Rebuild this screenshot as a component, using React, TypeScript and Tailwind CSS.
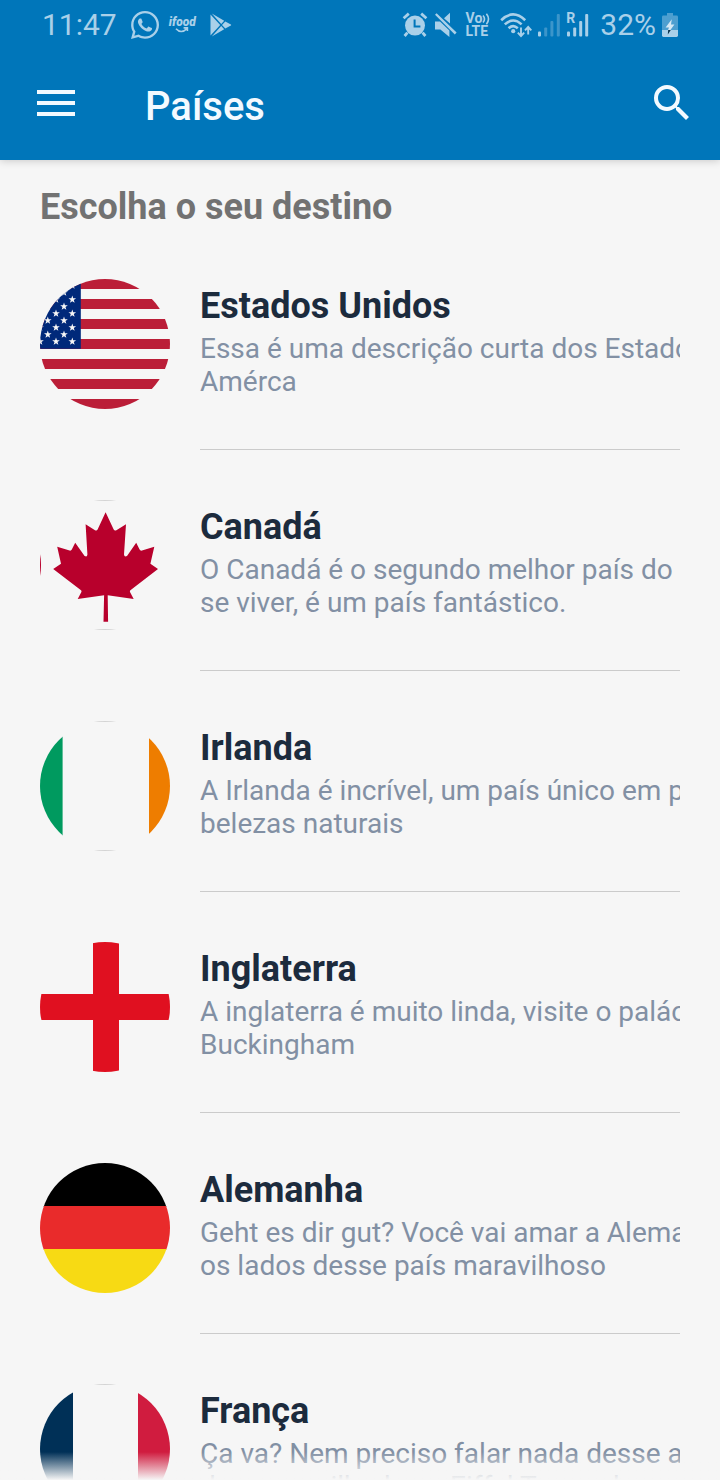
import type { ReactNode } from 'react';
import { FaWhatsapp } from 'react-icons/fa';

type Country = { name: string; lines: [string, string]; flag: ReactNode };

const STAR = 'M0-4 .94-1.24 3.8-1.24 1.5.48 2.35 3.24 0 1.54-2.35 3.24-1.5.48-3.8-1.24-.94-1.24Z';

function Flag({ label, children }: { label: string; children: ReactNode }) {
  return (
    <svg viewBox="0 0 130 130" role="img" aria-label={label} className="size-[130px] overflow-hidden rounded-full">
      {children}
    </svg>
  );
}

function PaleEdges() {
  return (
    <g fill="#d4d4d4">
      <rect width="130" height="1" />
      <rect y="129" width="130" height="1" />
    </g>
  );
}

function UsaFlag() {
  const stars: [number, number][] = [];
  for (let row = 0; row < 9; row++) {
    const columns = row % 2 === 0 ? [0, 16, 32.3] : [7.8, 24];
    columns.forEach((x) => stars.push([x, 6.6 + row * 7]));
  }
  return (
    <Flag label="Bandeira dos Estados Unidos">
      {[0, 20, 40, 60, 80, 100, 120].map((y) => (
        <rect key={y} y={y} width="130" height="10" fill="#bb1e38" />
      ))}
      <rect width="40.8" height="69.8" fill="#00297a" />
      {stars.map(([x, y]) => (
        <path key={`${x}-${y}`} d={STAR} transform={`translate(${x} ${y})`} fill="#f6f6f6" />
      ))}
    </Flag>
  );
}

function CanadaFlag() {
  return (
    <Flag label="Bandeira do Canadá">
      <PaleEdges />
      <rect y="40" width="1" height="50" fill="#b8002c" />
      <path
        fill="#b8002c"
        d="M65.6 12.3 73.7 29.4Q74.6 31.2 76.4 30.2L86 24.3 84 54.6Q84.4 57.4 87 56L96.2 42.7 99.6 49.6Q100.2 51 102 50.6L114.3 46.7 110.4 63.7 118 69 90.4 90.2Q89.6 91 90 92L93.7 99 67.7 95.2 68.1 121.7H63.5L64.1 95.2 37.7 99 41.4 92Q41.8 91 41 90.2L13.2 69 21 63.7 17.2 46.7 29.6 50.6Q31 51 31.8 49.6L35.2 42.7 44.6 56Q47.2 57.4 47.4 54.6L45.6 24.3 55 30.2Q56.8 31.2 57.6 29.4Z"
      />
    </Flag>
  );
}

function IrelandFlag() {
  return (
    <Flag label="Bandeira da Irlanda">
      <PaleEdges />
      <rect width="22.6" height="130" fill="#009a5f" />
      <rect x="109" width="21" height="130" fill="#ee7d00" />
    </Flag>
  );
}

function EnglandFlag() {
  return (
    <Flag label="Bandeira da Inglaterra">
      <rect x="53" width="26" height="130" fill="#e01020" />
      <rect y="52" width="130" height="26" fill="#e01020" />
    </Flag>
  );
}

function GermanyFlag() {
  return (
    <Flag label="Bandeira da Alemanha">
      <rect width="130" height="44" fill="#000" />
      <rect y="43" width="130" height="44" fill="#e92b2b" />
      <rect y="86" width="130" height="44" fill="#f7da14" />
    </Flag>
  );
}

function FranceFlag() {
  return (
    <Flag label="Bandeira da França">
      <PaleEdges />
      <rect width="33" height="130" fill="#003057" />
      <rect x="98" width="32" height="130" fill="#d01c3f" />
    </Flag>
  );
}

const countries: Country[] = [
  {
    name: 'Estados Unidos',
    lines: ['Essa é uma descrição curta dos Estados Unidos da', 'Amérca'],
    flag: <UsaFlag />,
  },
  {
    name: 'Canadá',
    lines: ['O Canadá é o segundo melhor país do mundo para', 'se viver, é um país fantástico.'],
    flag: <CanadaFlag />,
  },
  {
    name: 'Irlanda',
    lines: ['A Irlanda é incrível, um país único em paisagens e', 'belezas naturais'],
    flag: <IrelandFlag />,
  },
  {
    name: 'Inglaterra',
    lines: ['A inglaterra é muito linda, visite o palácio de', 'Buckingham'],
    flag: <EnglandFlag />,
  },
  {
    name: 'Alemanha',
    lines: ['Geht es dir gut? Você vai amar a Alemanha e todos', 'os lados desse país maravilhoso'],
    flag: <GermanyFlag />,
  },
  {
    name: 'França',
    lines: ['Ça va? Nem preciso falar nada desse amor', 'dos maravilhados a Eiffel Tower de'],
    flag: <FranceFlag />,
  },
];

function StatusBar() {
  return (
    <div className="flex h-[50px] items-center justify-between px-[42px] text-[#a9d0e9]">
      <div className="flex items-center">
        <span className="text-[30px] leading-[36px]">11:47</span>
        <FaWhatsapp className="ml-3 size-8" />
        <span className="ml-2 flex flex-col items-center">
          <span className="text-[12px] leading-[10px] font-black italic">ifood</span>
          <svg viewBox="0 0 14 6" className="h-1.5 w-3.5" fill="none" stroke="currentColor" strokeWidth="1.6">
            <path d="M1 1.8Q6 7.4 12 1.6M8.6.9H12.4V4" />
          </svg>
        </span>
        <svg viewBox="0 0 22 24" className="ml-3.5 h-6 w-[22px]" fill="currentColor">
          <path d="M.5 1.6V22.4L10.2 12ZM1.8.6 11.2 10.9 14.2 7.8ZM1.8 23.4 11.2 13.1 14.2 16.2ZM15.3 8.5 12 12l3.3 3.5 5.6-3.1q.7-.4 0-.8Z" />
        </svg>
      </div>
      <div className="flex items-center">
        <svg viewBox="0 0 26 26" className="size-[26px]">
          <circle cx="13" cy="13.6" r="10" fill="currentColor" />
          <path d="M1.6 6.2 6.8 1.6M24.4 6.2 19.2 1.6M5.4 20.6 2.6 24M20.6 20.6l2.8 3.4" stroke="currentColor" strokeWidth="2.8" />
          <path d="M12.6 7.6v6.8h5.8" fill="none" stroke="#0076ba" strokeWidth="2" />
        </svg>
        <svg viewBox="0 0 24 26" className="ml-1.5 h-[26px] w-6" fill="currentColor">
          <path d="M1 9.4V17.4H6.4L15.4 25V18.6L6 9.4ZM16 .8V11.6L10 6.2ZM1 2.8 2.6 1.2 22.6 20.6 20.8 22.6Z" />
        </svg>
        <span className="ml-2 flex flex-col text-[14px] leading-[13px] font-bold">
          <span className="flex items-center">
            Vo
            <svg viewBox="0 0 8 12" className="h-3 w-2" fill="none" stroke="currentColor" strokeWidth="1.6">
              <path d="M1 2.5Q4 6 1 9.5M4.4.8Q8.6 6 4.4 11.2" />
            </svg>
          </span>
          <span>LTE</span>
        </span>
        <svg viewBox="0 0 32 26" className="ml-2.5 h-[26px] w-8">
          <path d="M1.2 8.2Q13-3.4 25.2 8.2M4.8 12.4Q13.2 4.6 21.6 12.4M8.6 16.2Q13.2 12 17.8 16.2" fill="none" stroke="currentColor" strokeWidth="2.6" />
          <circle cx="13.2" cy="19.2" r="2.1" fill="currentColor" />
          <path d="M21 15.5v8.2M17.8 20.6 21 24l3.2-3.4M28.2 22.5v-7M25 18.4 28.2 15l3.2 3.4" fill="none" stroke="currentColor" strokeWidth="1.9" />
        </svg>
        <svg viewBox="0 0 23 24" className="ml-1.5 h-6 w-[23px]" fill="currentColor">
          <rect y="18.5" width="3" height="5" rx="1" />
          <g opacity=".35">
            <rect x="6.2" y="14.5" width="3" height="9" rx="1" />
            <rect x="12.4" y="8" width="3" height="15.5" rx="1" />
            <rect x="18.8" y="1" width="3" height="22.5" rx="1" />
          </g>
        </svg>
        <span className="relative ml-[5px] block">
          <span className="absolute top-0 left-0 text-[14px] leading-[10px] font-bold">R</span>
          <svg viewBox="0 0 23 24" className="h-6 w-[23px]" fill="currentColor">
            <rect x="1" y="18.5" width="3" height="5" rx="1" />
            <rect x="7.2" y="14.5" width="3" height="9" rx="1" />
            <rect x="13.2" y="8" width="3" height="15.5" rx="1" />
            <rect x="19.2" y="1" width="3" height="22.5" rx="1" />
          </svg>
        </span>
        <span className="ml-[11px] text-[30px] leading-[36px]">32%</span>
        <svg viewBox="0 0 16 24" className="ml-1.5 h-6 w-4">
          <path d="M5 0h6v2.6h3.6Q16 2.6 16 4V17H0V4Q0 2.6 1.4 2.6H5Z" fill="#4d9fd0" />
          <path d="M0 17H16V22.6Q16 24 14.6 24H1.4Q0 24 0 22.6Z" fill="currentColor" />
          <path d="M9.8 6.2 3.6 14.6H7L6 17h2.4L12.4 11.6H9Z" fill="#d5e9f5" />
          <path d="M6.2 17h2.6L5.8 21.4Z" fill="#06304a" />
        </svg>
      </div>
    </div>
  );
}

function AppHeader() {
  return (
    <header className="relative z-10 shrink-0 bg-[#0076ba] pb-1 shadow-[0_1px_8px_rgba(0,0,0,0.18)]">
      <StatusBar />
      <div className="flex h-[106px] items-center pr-6 pl-[37px] text-[#f3faff]">
        <button type="button" aria-label="Abrir menu">
          <svg viewBox="0 0 38 26" className="h-[26px] w-[38px]" fill="currentColor">
            <path d="M0 0H38V4H0ZM0 11H38V15H0ZM0 22H38V26H0Z" />
          </svg>
        </button>
        <h1 className="ml-[70px] flex-1 pt-2 text-[40px] leading-[48px] font-medium">Países</h1>
        <button type="button" aria-label="Buscar">
          <svg viewBox="0 0 24 24" className="size-12" fill="currentColor">
            <path d="M15.5 14h-.79l-.28-.27A6.47 6.47 0 0 0 16 9.5 6.5 6.5 0 1 0 9.5 16c1.61 0 3.09-.59 4.23-1.57l.27.28v.79l5 4.99L20.49 19zm-6 0C7.01 14 5 11.99 5 9.5S7.01 5 9.5 5 14 7.01 14 9.5 11.99 14 9.5 14" />
          </svg>
        </button>
      </div>
    </header>
  );
}

function CountryRow({ name, lines, flag }: Country) {
  return (
    <li className="pt-[50px]">
      <a href={`#${name}`} className="flex gap-[30px]">
        <div className="shrink-0 pb-[41px]">{flag}</div>
        <div className="min-w-0 flex-1 border-b border-[#cbcbcb] pt-1.5">
          <h3 className="text-[36px] leading-[42px] font-bold text-[#1c2b3d]">{name}</h3>
          <p className="mt-[5px] overflow-hidden text-[28px] leading-[33px] whitespace-nowrap text-[#8290a4]">
            {lines[0]}
            <br />
            {lines[1]}
          </p>
        </div>
      </a>
    </li>
  );
}

export default function App() {
  return (
    <div className="relative flex h-screen flex-col overflow-hidden bg-[#f6f6f6] font-[Roboto,sans-serif]">
      <AppHeader />
      <main className="min-h-0 flex-1 overflow-hidden px-10 pt-[25px]">
        <h2 className="text-[36px] leading-[44px] font-bold text-[#727272]">Escolha o seu destino</h2>
        <ul>
          {countries.map((country) => (
            <CountryRow key={country.name} {...country} />
          ))}
        </ul>
      </main>
      <div className="pointer-events-none absolute inset-x-0 bottom-0 h-7 bg-linear-to-t from-[#f6f6f6] to-transparent" />
    </div>
  );
}
